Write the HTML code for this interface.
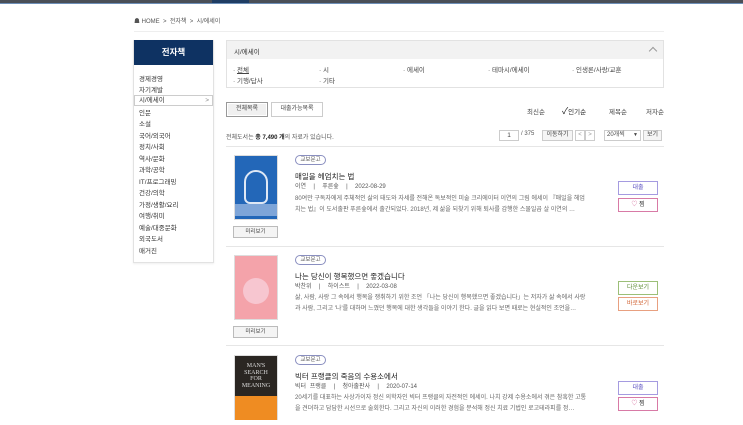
<!DOCTYPE html>
<html><head><meta charset="utf-8"><style>
*{margin:0;padding:0;box-sizing:border-box}
body{width:743px;height:425px;overflow:hidden;background:#fff;font-family:"Liberation Sans","Noto Sans CJK KR",sans-serif;color:#333;position:relative;font-size:7px}
.a{position:absolute;white-space:nowrap}
.btn{position:absolute;border:1px solid #ccc;background:#fff;text-align:center;font-size:6px;color:#444}
.cat div{position:absolute;font-size:6.5px;color:#444}
.side div{position:absolute;left:5px;font-size:6.5px;color:#333}
.badge{position:absolute;width:31px;height:10px;border:1px solid #8a8fc0;border-radius:6px;font-size:5.5px;text-align:center;line-height:8px;color:#555}
.title{position:absolute;font-size:7.5px;color:#222}
.meta{position:absolute;font-size:6px;color:#555;word-spacing:2px}
.desc{position:absolute;font-size:6px;color:#666;line-height:11px;width:292px;height:22px;overflow:hidden}
.rb{position:absolute;width:40px;height:14px;border:1px solid;text-align:center;line-height:12px;font-size:6px}
.pv{position:absolute;left:233px;width:45px;height:12px;border:1px solid #bbb;background:#f4f4f4;font-size:5.5px;text-align:center;line-height:10px;color:#444}
.hr{position:absolute;left:226px;width:438px;height:1px;background:#e6e6e6}
</style></head><body>
<div class="a" style="left:0;top:0;width:743px;height:3px;background:#4a4f57"></div>
<div class="a" style="left:212px;top:0;width:37px;height:3px;background:#1f3d63"></div>
<div class="a" style="left:0;top:3px;width:743px;height:1px;background:#6d8fb8"></div>
<div class="a" style="left:134px;top:16px;font-size:6px;color:#555">&#9751; HOME &nbsp;&gt;&nbsp; 전자책 &nbsp;&gt;&nbsp; 시/에세이</div>
<div class="a" style="left:134px;top:31px;width:530px;height:1px;background:#eee"></div>

<div class="a" style="left:133px;top:40px;width:81px;height:223px;border:1px solid #e2e2e2;box-shadow:0 1px 2px #eee"></div>
<div class="a" style="left:134px;top:40px;width:79px;height:25px;background:#0e3262;color:#fff;font-size:8.5px;text-align:center;line-height:25px;font-weight:bold">전자책</div>
<div class="side">
<div style="left:139px;top:73px">경제경영</div>
<div style="left:139px;top:84px">자기계발</div>
<div style="left:134px;top:95px;width:79px;height:11px;border:1px solid #ccc;padding-left:4px;line-height:9px">시/에세이<span style="float:right;margin-right:3px;color:#888">&gt;</span></div>
<div style="left:139px;top:107px">인문</div>
<div style="left:139px;top:118px">소설</div>
<div style="left:139px;top:130px">국어/외국어</div>
<div style="left:139px;top:141px">정치/사회</div>
<div style="left:139px;top:153px">역사/문화</div>
<div style="left:139px;top:164px">과학/공학</div>
<div style="left:139px;top:176px">IT/프로그래밍</div>
<div style="left:139px;top:187px">건강/의학</div>
<div style="left:139px;top:199px">가정/생활/요리</div>
<div style="left:139px;top:210px">여행/취미</div>
<div style="left:139px;top:222px">예술/대중문화</div>
<div style="left:139px;top:233px">외국도서</div>
<div style="left:139px;top:245px">매거진</div>
</div>

<div class="a" style="left:226px;top:40px;width:438px;height:48px;border:1px solid #e2e2e2"></div>
<div class="a" style="left:227px;top:41px;width:436px;height:18px;background:#f2f2f2"></div>
<div class="a" style="left:234px;top:46px;font-size:6.5px;color:#333">시/에세이</div>
<div class="a" style="left:650px;top:48px;width:6px;height:6px;border-left:1px solid #999;border-top:1px solid #999;transform:rotate(45deg)"></div>
<div class="cat">
<div style="left:233px;top:64px">· <u>전체</u></div>
<div style="left:319px;top:64px">· 시</div>
<div style="left:403px;top:64px">· 에세이</div>
<div style="left:488px;top:64px">· 테마시/에세이</div>
<div style="left:572px;top:64px">· 인생론/사랑/교훈</div>
<div style="left:233px;top:75px">· 기행/답사</div>
<div style="left:319px;top:75px">· 기타</div>
</div>

<div class="btn" style="left:226px;top:102px;width:42px;height:15px;line-height:13px;background:#f0f0f0;border-color:#999;box-shadow:inset 0 0 0 1px #fff">전체목록</div>
<div class="btn" style="left:271px;top:102px;width:52px;height:15px;line-height:13px">대출가능목록</div>
<div class="a" style="left:527px;top:106px;font-size:6.5px;color:#444">최신순</div>
<div class="a" style="left:562px;top:104px;font-size:6.5px;color:#222"><span style="font-size:9px">✓</span>인기순</div>
<div class="a" style="left:609px;top:106px;font-size:6.5px;color:#444">제목순</div>
<div class="a" style="left:646px;top:106px;font-size:6.5px;color:#444">저자순</div>

<div class="a" style="left:226px;top:132px;font-size:6px;color:#555">전체도서는 <b style="color:#222">총 7,490 개</b>의 자료가 있습니다.</div>
<div class="btn" style="left:499px;top:130px;width:20px;height:11px;font-size:6.5px;line-height:9px">1</div>
<div class="a" style="left:521px;top:131px;font-size:6px;color:#555">/ 375</div>
<div class="btn" style="left:542px;top:130px;width:31px;height:11px;line-height:9px;background:#f5f5f5">이동하기</div>
<div class="btn" style="left:575px;top:130px;width:10px;height:11px;line-height:9px;color:#999">&lt;</div>
<div class="btn" style="left:585px;top:130px;width:10px;height:11px;line-height:9px;color:#999">&gt;</div>
<div class="btn" style="left:604px;top:130px;width:37px;height:11px;line-height:9px;text-align:left;padding-left:2px">20개씩<span style="float:right;margin-right:2px;font-size:5px">▼</span></div>
<div class="btn" style="left:643px;top:130px;width:19px;height:11px;line-height:9px;background:#f5f5f5">보기</div>
<div class="hr" style="top:146px"></div>

<!-- item1 -->
<div class="a" style="left:234px;top:155px;width:44px;height:65px;background:#2367b8;border:1px solid #ddd">
<div class="a" style="left:9px;top:14px;width:24px;height:34px;border:2px solid #dfe8f5;border-radius:12px 12px 6px 6px"></div>
<div class="a" style="left:0;top:48px;width:42px;height:12px;background:#7ea5d8"></div>
</div>
<div class="pv" style="top:226px">미리보기</div>
<div class="badge" style="left:295px;top:155px">교보문고</div>
<div class="title" style="left:295px;top:171px">매일을 헤엄치는 법</div>
<div class="meta" style="left:295px;top:181px">이연 &nbsp;| &nbsp;푸른숲 &nbsp;| &nbsp;2022-08-29</div>
<div class="desc" style="left:295px;top:194px;white-space:normal">80여만 구독자에게 주체적인 삶의 태도와 자세를 전해온 독보적인 미술 크리에이터 이연의 그림 에세이 『매일을 헤엄치는 법』이 도서출판 푸른숲에서 출간되었다. 2018년, 제 삶을 되찾기 위해 퇴사를 감행한 스물일곱 살 이연의 …</div>
<div class="rb" style="left:618px;top:181px;border-color:#a59be0;color:#5a4fc0">대출</div>
<div class="rb" style="left:618px;top:198px;border-color:#d87aa6;color:#333"><span style="color:#d05a90">♡</span> 찜</div>
<div class="hr" style="top:246px"></div>

<!-- item2 -->
<div class="a" style="left:234px;top:255px;width:44px;height:65px;background:#f4a3aa;border:1px solid #ddd">
<div class="a" style="left:8px;top:22px;width:26px;height:26px;border-radius:50%;background:#f7c6d0"></div>
</div>
<div class="pv" style="top:326px">미리보기</div>
<div class="badge" style="left:295px;top:255px">교보문고</div>
<div class="title" style="left:295px;top:271px">나는 당신이 행복했으면 좋겠습니다</div>
<div class="meta" style="left:295px;top:281px">박찬위 &nbsp;| &nbsp;하이스트 &nbsp;| &nbsp;2022-03-08</div>
<div class="desc" style="left:295px;top:293px;white-space:normal">삶, 사람, 사랑 그 속에서 행복을 쟁취하기 위한 조언 「나는 당신이 행복했으면 좋겠습니다」는 저자가 삶 속에서 사랑과 사람, 그리고 '나'를 대하며 느꼈던 행복에 대한 생각들을 이야기 한다. 글을 읽다 보면 때로는 현실적인 조언을…</div>
<div class="rb" style="left:618px;top:281px;border-color:#9cbf78;color:#5a8a30">다운보기</div>
<div class="rb" style="left:618px;top:297px;border-color:#e8a080;color:#d06030">바로보기</div>
<div class="hr" style="top:345px"></div>

<!-- item3 -->
<div class="a" style="left:234px;top:355px;width:44px;height:65px;background:#2a2622;border:1px solid #ddd;color:#ddd;font-family:'Liberation Serif',serif;font-size:6px;line-height:6.5px;text-align:center;padding-top:7px">MAN'S<br>SEARCH<br>FOR<br>MEANING
<div class="a" style="left:0;top:40px;width:42px;height:24px;background:#ef8c22"></div>
</div>
<div class="badge" style="left:295px;top:355px">교보문고</div>
<div class="title" style="left:295px;top:371px">빅터 프랭클의 죽음의 수용소에서</div>
<div class="meta" style="left:295px;top:381px">빅터 프랭클 &nbsp;| &nbsp;청아출판사 &nbsp;| &nbsp;2020-07-14</div>
<div class="desc" style="left:295px;top:393px;white-space:normal">20세기를 대표하는 사상가이자 정신 의학자인 빅터 프랭클의 자전적인 에세이. 나치 강제 수용소에서 겪은 참혹한 고통을 견뎌하고 담담한 시선으로 술회한다. 그리고 자신의 이러한 경험을 분석해 정신 치료 기법인 로고테라피를 정…</div>
<div class="rb" style="left:618px;top:381px;border-color:#a59be0;color:#5a4fc0">대출</div>
<div class="rb" style="left:618px;top:397px;border-color:#d87aa6;color:#333"><span style="color:#d05a90">♡</span> 찜</div>
</body></html>
